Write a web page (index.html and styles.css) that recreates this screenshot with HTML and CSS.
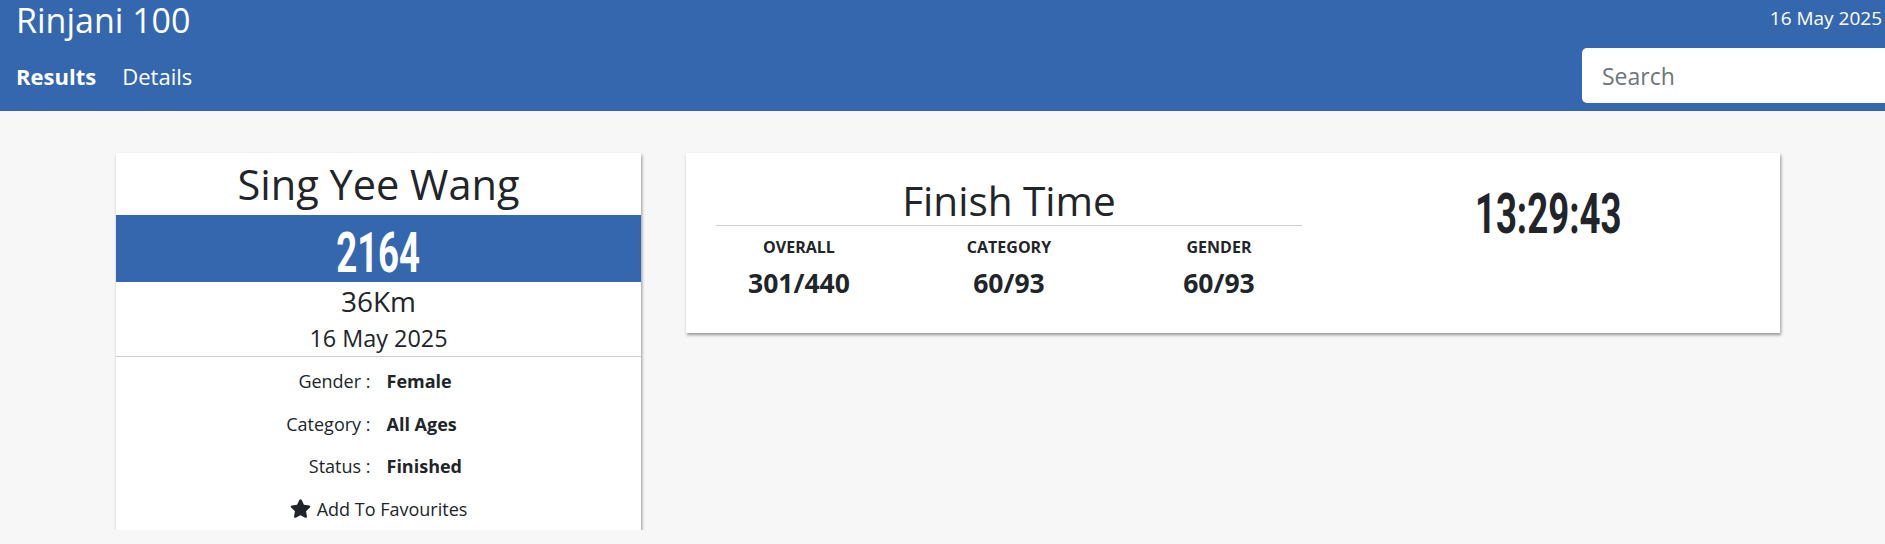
FILE: index.html
```html
<!DOCTYPE html>
<html lang="en">
<head>
  <meta charset="UTF-8" />
  <title>Rinjani 100 | Results</title>
  <link rel="stylesheet" href="styles.css">
</head>
<body>
  <header class="topbar">
    <div class="brand-row">
      <span class="brand">Rinjani 100</span>
      <span class="today">16 May 2025</span>
    </div>
    <div class="nav-row">
      <nav class="nav">
        <a href="#" class="active">Results</a>
        <a href="#">Details</a>
      </nav>
      <input type="text" class="search" placeholder="Search" />
    </div>
  </header>

  <main class="content">
    <div class="runner-card">
      <h2 class="runner-name">Sing Yee Wang</h2>
      <div class="bib"><span class="narrow">2164</span></div>
      <div class="distance">36Km</div>
      <div class="race-date">16 May 2025</div>
      <div class="info">
        <span class="info-label">Gender :</span><span class="info-value">Female</span>
        <span class="info-label">Category :</span><span class="info-value">All Ages</span>
        <span class="info-label">Status :</span><span class="info-value">Finished</span>
      </div>
      <a href="#" class="fav">
        <svg class="star" viewBox="0 0 576 512"><path d="M259.3 17.8L194 150.2 47.9 171.5c-26.2 3.8-36.7 36.1-17.7 54.6l105.7 103-25 145.5c-4.5 26.3 23.2 46 46.4 33.7L288 439.6l130.7 68.7c23.2 12.2 50.9-7.4 46.4-33.7l-25-145.5 105.7-103c19-18.5 8.5-50.8-17.7-54.6L382 150.2 316.7 17.8c-11.7-23.6-45.6-23.9-57.4 0z"/></svg>
        <span>Add To Favourites</span>
      </a>
    </div>

    <div class="time-card">
      <div class="ranks">
        <h3 class="ranks-title">Finish Time</h3>
        <div class="rank-grid">
          <div class="rank">
            <div class="rank-label">OVERALL</div>
            <div class="rank-value">301/440</div>
          </div>
          <div class="rank">
            <div class="rank-label">CATEGORY</div>
            <div class="rank-value">60/93</div>
          </div>
          <div class="rank">
            <div class="rank-label">GENDER</div>
            <div class="rank-value">60/93</div>
          </div>
        </div>
      </div>
      <div class="finish-time"><span class="narrow">13:29:43</span></div>
    </div>
  </main>
</body>
</html>
```

FILE: styles.css
```css
body {
  margin: 0;
  font-family: 'Open Sans', sans-serif;
  color: #212529;
  background-color: #f7f7f7;
  overflow: hidden;
}

.topbar {
  background-color: #3567ae;
  height: 111px;
  padding: 0 3px 0 16px;
  color: white;
}

.brand-row {
  display: flex;
  justify-content: space-between;
  align-items: flex-start;
  height: 48px;
}

.brand {
  font-size: 34px;
  line-height: 40px;
}

.today {
  font-size: 19px;
  line-height: 36px;
}

.nav-row {
  display: flex;
  justify-content: space-between;
  align-items: center;
}

.nav a {
  color: white;
  text-decoration: none;
  font-size: 22px;
  margin-right: 22px;
}

.nav a.active {
  font-weight: bold;
}

.search {
  width: 340px;
  height: 55px;
  box-sizing: border-box;
  margin-right: -40px;
  border: none;
  border-radius: 5px;
  padding: 0 20px;
  font-family: 'Open Sans', sans-serif;
  font-size: 23px;
}

.search::placeholder {
  color: #6c757d;
}

.content {
  display: flex;
  align-items: flex-start;
  gap: 45px;
  padding: 42px 0 0 116px;
}

.runner-card,
.time-card {
  background: white;
  box-shadow: 1px 2px 3px rgba(0,0,0,0.4);
}

.runner-card {
  width: 525px;
  text-align: center;
}

.runner-name {
  margin: 0;
  height: 62px;
  font-size: 41.5px;
  font-weight: normal;
  line-height: 62px;
}

.narrow {
  display: inline-block;
  font-family: Roboto, sans-serif;
  font-weight: bold;
  transform: scaleX(0.665);
}

.bib {
  background-color: #3567ae;
  color: white;
  height: 67px;
  box-sizing: border-box;
  padding-top: 4px;
  line-height: 63px;
  font-size: 55px;
}

.distance {
  font-size: 28px;
  line-height: 38px;
}

.race-date {
  font-size: 23.4px;
  line-height: 36px;
  border-bottom: 1px solid #ccc;
}

.info {
  display: grid;
  grid-template-columns: 1fr 1fr;
  grid-auto-rows: 42.5px;
  column-gap: 16px;
  padding-top: 3px;
  font-size: 18px;
  line-height: 42.5px;
}

.info-label {
  text-align: right;
}

.info-value {
  text-align: left;
  font-weight: bold;
}

.fav {
  display: flex;
  justify-content: center;
  align-items: center;
  gap: 6px;
  height: 42.5px;
  color: #212529;
  text-decoration: none;
  font-size: 18px;
}

.star {
  width: 21px;
  height: 19px;
  fill: #212529;
}

.time-card {
  width: 1094px;
  height: 180px;
  box-sizing: border-box;
  display: flex;
  padding: 0 8px;
}

.ranks {
  width: 630px;
  padding-top: 24px;
  text-align: center;
}

.ranks-title {
  margin: 0 22px;
  font-size: 40.5px;
  font-weight: normal;
  line-height: 48px;
  border-bottom: 1px solid #ccc;
}

.rank-grid {
  display: grid;
  grid-template-columns: 1fr 1fr 1fr;
}

.rank-label {
  font-size: 16px;
  font-weight: bold;
  line-height: 42px;
}

.rank-value {
  font-size: 26.5px;
  font-weight: bold;
  line-height: 30px;
}

.finish-time {
  flex: 1;
  padding-top: 29px;
  text-align: center;
  font-size: 55px;
  line-height: 60px;
}
```
